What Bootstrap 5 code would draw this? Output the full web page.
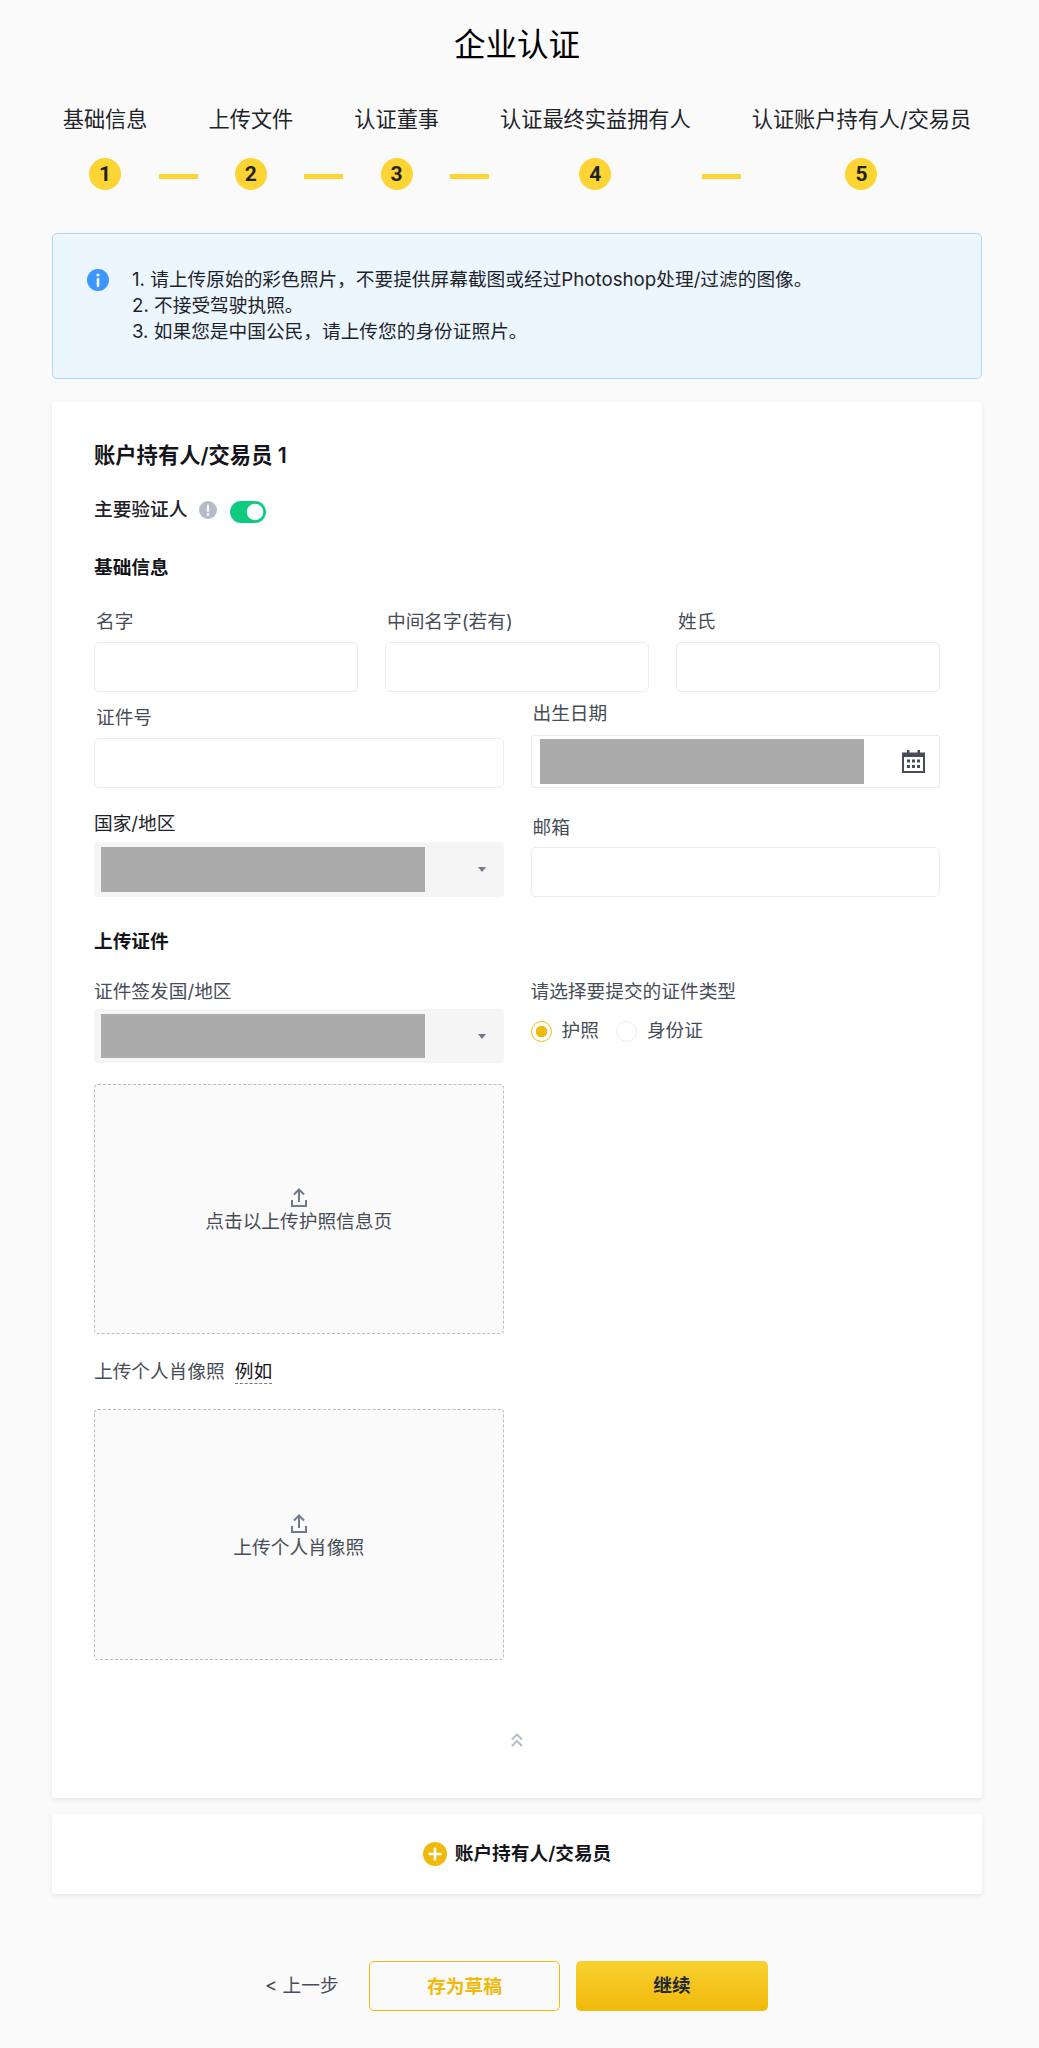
<!DOCTYPE html>
<html lang="zh">
<head>
<meta charset="utf-8">
<title>企业认证</title>
<link href="https://cdn.jsdelivr.net/npm/bootstrap@5.3.0/dist/css/bootstrap.min.css" rel="stylesheet">
<style>
body{background:#fafafa;font-family:Inter,"Noto Sans CJK SC",sans-serif;color:#1e2329;font-size:18.7px;line-height:26px;min-height:2048px}
.shell{padding:25px 52px 0 52px;width:1034px}
.page-title{font-size:31.5px;line-height:40px;font-weight:400;text-align:center;margin:0;color:#000}
.steps{margin-top:41px}
.step-name{font-size:21.2px;line-height:26px;white-space:nowrap;color:#1e2329}
.step-dot{width:32px;height:32px;border-radius:50%;background:#fcd535;color:#1e2329;font-family:"Liberation Sans Narrow",Roboto,sans-serif;font-weight:700;font-size:21px;margin-top:26px}
.step-sep{width:39px;height:5px;background:#fcd535;margin:0 11px 11px;flex:none}
.note{margin:43px 0 0;height:146px;padding:33px 34px;background:#ecf6ff;border:1px solid #aed8f9;border-radius:5px;color:#1e2329;gap:23px}
.note-icon{flex:none;margin-top:2px}
.sheet{background:#fff;border:0;border-radius:2px;box-shadow:0 2px 5px rgba(0,0,0,.08)}
.main-sheet{margin-top:23px;height:1396px;padding:39px 42px 0}
.sheet-title{font-size:21.3px;line-height:28px;font-weight:600;color:#14151a}
.primary-line{margin-top:28px;font-weight:500;color:#1e2329;height:26px}
.alert-dot{margin-left:12px;margin-right:13px;flex:none}
.toggle-wrap{margin:3px 0 0;padding:0;min-height:0}
.toggle.form-check-input{width:36px;height:22px;margin:0;border:0;background-color:#0ecb81;float:none;box-shadow:none}
.group-title{font-weight:600;color:#14151a;line-height:28px;font-size:18.7px}
.field-row{--bs-gutter-x:27px;--bs-gutter-y:0}
.field-label{display:block;color:#474d57;margin:0 0 6px 2px;line-height:28px}
.field-box.form-control{height:50px;border:1px solid #eaecef;border-radius:5px;background:#fff}
.date-box{height:53px;border:1px solid #eaecef;border-radius:3px;background:#fff;padding:3px 14px 3px 8px}
.mask{background:#aaabaa;width:324px;height:100%;flex:none}
.pick-box{background:#f5f5f5;border-radius:4px;padding:5px 18px 5px 7px}
.pick-tall{height:55px}
.pick-caret{width:0;height:0;border:4px solid transparent;border-top:5px solid #707a8a;border-bottom:0}
.radio-set{margin-top:12px;height:26px;gap:0}
.radio-mark.form-check-input{width:21px;height:21px;margin:0;border:1px solid #eaecef;background:#fff;float:none;box-shadow:none}
.radio-mark.form-check-input:checked{background:radial-gradient(circle,#f0b90b 0 5.5px,#fff 6px);border:1.5px solid #f0b90b}
.radio-text{color:#474d57;margin:0 17px 0 10px;line-height:26px}
.drop{background:#fafafa;border:1px dashed #b7bdc6;border-radius:4px;color:#474d57;padding-top:5px}
.drop-a{height:250px;margin-top:21px}
.drop-b{height:251px;margin-top:24px;padding-top:5px}
.drop-icon{display:block;margin-bottom:2px}
.hint-link{color:#14151a;border-bottom:1px dashed #707a8a;margin-left:10px;line-height:22px;display:inline-block}
.portrait-label{margin-top:25px;color:#474d57;margin-left:0;line-height:26px}
.fold{margin-top:73px}
.add-sheet{margin-top:16px;height:80px;font-weight:600;color:#14151a;gap:8px}
.actions{margin-top:67px;padding-left:213px}
.back-link{color:#474d57;width:104px;white-space:nowrap}
.btn-draft.btn,.btn-go.btn{height:50px;border-radius:5px;font-size:18.7px;font-weight:600;padding:0;line-height:47px}
.btn-draft.btn{width:191px;background:#fafafa;border:1.5px solid #f0b90b;color:#f0b90b;margin-right:16px}
.btn-go.btn{width:192px;background:linear-gradient(180deg,#f8d12f,#f0b90b);border:0;color:#212833;line-height:50px}
</style>
</head>
<body>
<div class="shell">
  <h1 class="page-title">企业认证</h1>

  <div class="steps d-flex justify-content-center">
    <div class="d-flex flex-column align-items-center"><div class="step-name">基础信息</div><div class="step-dot d-flex align-items-center justify-content-center">1</div></div>
    <div class="step-sep align-self-end"></div>
    <div class="d-flex flex-column align-items-center"><div class="step-name">上传文件</div><div class="step-dot d-flex align-items-center justify-content-center">2</div></div>
    <div class="step-sep align-self-end"></div>
    <div class="d-flex flex-column align-items-center"><div class="step-name">认证董事</div><div class="step-dot d-flex align-items-center justify-content-center">3</div></div>
    <div class="step-sep align-self-end"></div>
    <div class="d-flex flex-column align-items-center"><div class="step-name">认证最终实益拥有人</div><div class="step-dot d-flex align-items-center justify-content-center">4</div></div>
    <div class="step-sep align-self-end"></div>
    <div class="d-flex flex-column align-items-center"><div class="step-name">认证账户持有人/交易员</div><div class="step-dot d-flex align-items-center justify-content-center">5</div></div>
  </div>

  <div class="note d-flex align-items-start">
    <svg class="note-icon" width="22" height="22" viewBox="0 0 22 22"><circle cx="11" cy="11" r="11" fill="#3c96ff"/><circle cx="11" cy="6" r="1.6" fill="#fff"/><rect x="9.7" y="9" width="2.6" height="9" rx="1" fill="#fff"/></svg>
    <div>
      <div>1. 请上传原始的彩色照片，不要提供屏幕截图或经过Photoshop处理/过滤的图像。</div>
      <div>2. 不接受驾驶执照。</div>
      <div>3. 如果您是中国公民，请上传您的身份证照片。</div>
    </div>
  </div>

  <div class="sheet main-sheet">
    <div class="sheet-title">账户持有人/交易员 1</div>
    <div class="primary-line d-flex align-items-center">
      <span>主要验证人</span>
      <svg class="alert-dot" width="18" height="18" viewBox="0 0 18 18"><circle cx="9" cy="9" r="9" fill="#b7bdc6"/><rect x="8" y="3.5" width="2" height="7.5" rx="1" fill="#fff"/><circle cx="9" cy="13.5" r="1.2" fill="#fff"/></svg>
      <div class="toggle-wrap form-check form-switch d-flex"><input class="toggle form-check-input" type="checkbox" role="switch" checked aria-label="主要验证人"></div>
    </div>
    <div class="group-title" style="margin-top:31px">基础信息</div>

    <div class="row field-row" style="margin-top:26px">
      <div class="col-4"><label class="field-label">名字</label><input class="form-control field-box" type="text"></div>
      <div class="col-4"><label class="field-label">中间名字(若有)</label><input class="form-control field-box" type="text"></div>
      <div class="col-4"><label class="field-label">姓氏</label><input class="form-control field-box" type="text"></div>
    </div>

    <div class="row field-row align-items-end" style="margin-top:8px">
      <div class="col-6"><label class="field-label">证件号</label><input class="form-control field-box" type="text"></div>
      <div class="col-6"><label class="field-label" style="margin-bottom:7px">出生日期</label>
        <div class="date-box d-flex align-items-center justify-content-between">
          <div class="mask"></div>
          <svg width="23" height="23" viewBox="0 0 23 23" fill="#474d57"><path fill-rule="evenodd" d="M5 0h2.5v2.5h8V0H18v2.5h5V23H0V2.5h5V0zM2 7v14h19V7H2z"/><rect x="5" y="9.5" width="3" height="3"/><rect x="10" y="9.5" width="3" height="3"/><rect x="15" y="9.5" width="3" height="3"/><rect x="5" y="15" width="3" height="3"/><rect x="10" y="15" width="3" height="3"/><rect x="15" y="15" width="3" height="3"/></svg>
        </div>
      </div>
    </div>

    <div class="row field-row align-items-end" style="margin-top:22px">
      <div class="col-6"><label class="field-label" style="margin:0 0 4px 0;color:#1e2329">国家/地区</label>
        <div class="pick-box pick-tall d-flex align-items-stretch justify-content-between"><div class="mask"></div><div class="pick-caret align-self-center"></div></div>
      </div>
      <div class="col-6"><label class="field-label" style="margin-bottom:5px">邮箱</label><input class="form-control field-box" type="text"></div>
    </div>

    <div class="group-title" style="margin-top:31px">上传证件</div>

    <div class="row field-row" style="margin-top:22px">
      <div class="col-6"><label class="field-label" style="margin:0 0 3px 0">证件签发国/地区</label>
        <div class="pick-box d-flex align-items-stretch justify-content-between" style="height:54px"><div class="mask"></div><div class="pick-caret align-self-center"></div></div>
        <div class="drop drop-a d-flex flex-column align-items-center justify-content-center">
          <svg class="drop-icon" width="16" height="19" viewBox="0 0 16 19" fill="none" stroke="#707a8a" stroke-width="2"><path d="M8 14V2M3 6.5 8 1.5l5 5M1 12v6h14v-6"/></svg>
          <span>点击以上传护照信息页</span>
        </div>
      </div>
      <div class="col-6"><label class="field-label" style="margin:0">请选择要提交的证件类型</label>
        <div class="radio-set d-flex align-items-center">
          <input class="radio-mark form-check-input" type="radio" name="doc" checked aria-label="护照"><span class="radio-text">护照</span>
          <input class="radio-mark form-check-input" type="radio" name="doc" aria-label="身份证"><span class="radio-text">身份证</span>
        </div>
      </div>
    </div>

    <div class="row field-row">
      <div class="col-6">
        <div class="portrait-label">上传个人肖像照<span class="hint-link">例如</span></div>
        <div class="drop drop-b d-flex flex-column align-items-center justify-content-center">
          <svg class="drop-icon" width="16" height="19" viewBox="0 0 16 19" fill="none" stroke="#707a8a" stroke-width="2"><path d="M8 14V2M3 6.5 8 1.5l5 5M1 12v6h14v-6"/></svg>
          <span>上传个人肖像照</span>
        </div>
      </div>
    </div>

    <div class="fold d-flex justify-content-center">
      <svg width="12" height="14" viewBox="0 0 12 14" fill="none" stroke="#b7bdc6" stroke-width="2"><path d="M1 6.5 6 1.5l5 5M1 13 6 8l5 5"/></svg>
    </div>
  </div>

  <div class="sheet add-sheet d-flex align-items-center justify-content-center">
    <svg width="24" height="24" viewBox="0 0 24 24"><circle cx="12" cy="12" r="12" fill="#f0b90b"/><path d="M12 5.5v13M5.5 12h13" stroke="#fff" stroke-width="2.6"/></svg>
    <span>账户持有人/交易员</span>
  </div>

  <div class="actions d-flex align-items-center">
    <div class="back-link">&lt; 上一步</div>
    <button class="btn btn-draft" type="button">存为草稿</button>
    <button class="btn btn-go" type="button">继续</button>
  </div>
</div>
<script src="https://cdn.jsdelivr.net/npm/bootstrap@5.3.0/dist/js/bootstrap.bundle.min.js"></script>
</body>
</html>
